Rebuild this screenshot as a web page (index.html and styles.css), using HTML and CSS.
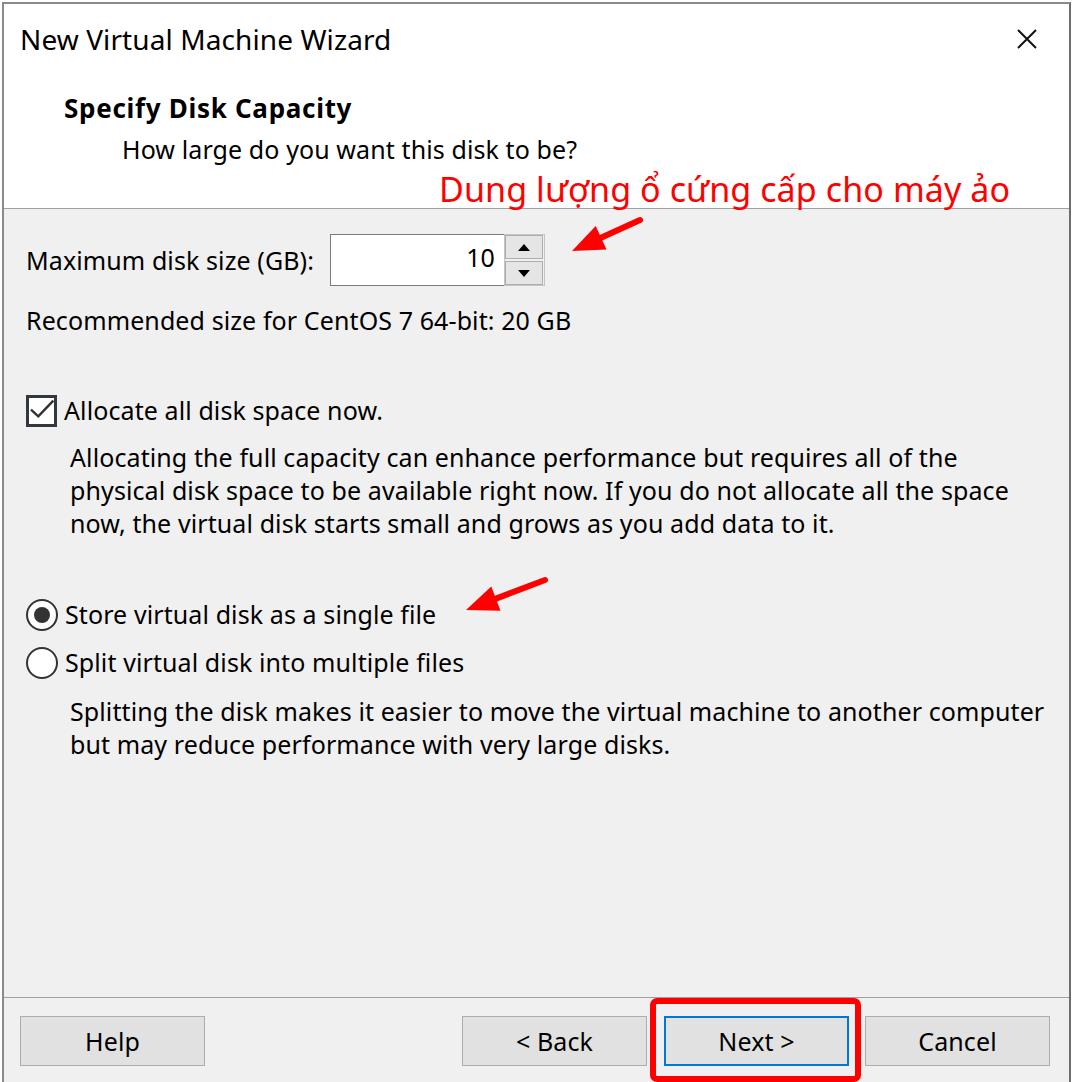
FILE: index.html
```html
<!DOCTYPE html>
<html lang="en">
<head>
<meta charset="utf-8">
<title>New Virtual Machine Wizard</title>
<link rel="stylesheet" href="styles.css">
</head>
<body>
<div class="window">
  <div class="header">
    <div class="titlebar">
      <span class="title">New Virtual Machine Wizard</span>
      <svg class="close" width="20" height="20" viewBox="0 0 20 20"><path d="M1 1 L19 19 M19 1 L1 19" stroke="#111" stroke-width="2" fill="none"/></svg>
    </div>
    <div class="heading">Specify Disk Capacity</div>
    <div class="subheading">How large do you want this disk to be?</div>
  </div>
  <div class="content">
    <div class="size-row">
      <span class="label">Maximum disk size (GB):</span>
      <div class="spinner">
        <div class="spin-input">10</div>
        <div class="spin-btns">
          <div class="spin-btn"><svg width="12" height="7" viewBox="0 0 12 7"><path d="M0 7 L6 0 L12 7 Z" fill="#000"/></svg></div>
          <div class="spin-btn"><svg width="12" height="7" viewBox="0 0 12 7"><path d="M0 0 L12 0 L6 7 Z" fill="#000"/></svg></div>
        </div>
      </div>
    </div>
    <div class="recommended">Recommended size for CentOS 7 64-bit: 20 GB</div>
    <div class="check-row">
      <span class="checkbox"><svg width="25" height="25" viewBox="0 0 25 25"><path d="M2 11.7 L9.3 18.3 L24.3 2.7" stroke="#333" stroke-width="2.4" fill="none"/></svg></span>
      <span class="opt-label">Allocate all disk space now.</span>
    </div>
    <p class="desc desc-alloc">Allocating the full capacity can enhance performance but requires all of the<br>physical disk space to be available right now. If you do not allocate all the space<br>now, the virtual disk starts small and grows as you add data to it.</p>
    <div class="radio-row radio-first">
      <span class="radio checked"></span>
      <span class="opt-label">Store virtual disk as a single file</span>
    </div>
    <div class="radio-row radio-second">
      <span class="radio"></span>
      <span class="opt-label">Split virtual disk into multiple files</span>
    </div>
    <p class="desc desc-split">Splitting the disk makes it easier to move the virtual machine to another computer<br>but may reduce performance with very large disks.</p>
  </div>
  <div class="footer">
    <button class="btn">Help</button>
    <span class="spacer"></span>
    <button class="btn btn-back">&lt; Back</button>
    <button class="btn btn-next">Next &gt;</button>
    <button class="btn btn-cancel">Cancel</button>
  </div>
</div>
<div class="annotation">Dung lượng ổ cứng cấp cho máy ảo</div>
<svg class="marks" width="1073" height="1082" viewBox="0 0 1073 1082">
  <line x1="640" y1="220" x2="601" y2="237.7" stroke="#ff0000" stroke-width="6" stroke-linecap="round"/>
  <polygon points="572,251 595.7,225.9 606.5,249.5" fill="#ff0000"/>
  <line x1="545" y1="580" x2="496" y2="598.6" stroke="#ff0000" stroke-width="6" stroke-linecap="round"/>
  <polygon points="466,610 491.3,586.4 500.5,610.8" fill="#ff0000"/>
  <rect x="653" y="1001" width="205" height="78" rx="4" ry="4" fill="none" stroke="#ff0000" stroke-width="6"/>
</svg>
</body>
</html>
```
FILE: styles.css
```css
html, body {
  margin: 0;
  padding: 0;
  background: #ffffff;
}

body {
  font-family: "Noto Sans", "Open Sans", sans-serif;
  color: #000;
  overflow: hidden;
}

.window {
  box-sizing: border-box;
  margin: 2px 0 0 2px;
  width: 1069px;
  height: 1080px;
  border: 2px solid #8a8a8a;
  border-right-color: #6d6d6d;
  border-bottom: none;
  background: #f0f0f0;
  display: flex;
  flex-direction: column;
}

.header {
  box-sizing: border-box;
  height: 205px;
  background: #ffffff;
  border-bottom: 1px solid #a0a0a0;
  padding-top: 17px;
}

.titlebar {
  display: flex;
  align-items: center;
  justify-content: space-between;
  padding-left: 16px;
  padding-right: 32px;
  height: 36px;
}

.title {
  font-size: 28px;
  letter-spacing: 0.1px;
  line-height: 36px;
}

.close {
  display: block;
  margin-top: 0;
}

.heading {
  font-size: 26px;
  font-weight: 700;
  letter-spacing: 0.7px;
  line-height: 33px;
  margin-top: 35px;
  padding-left: 60px;
}

.subheading {
  font-size: 25px;
  letter-spacing: 0.1px;
  line-height: 33px;
  margin-top: 8px;
  padding-left: 118px;
}

.content {
  box-sizing: border-box;
  height: 789px;
  border-bottom: 1px solid #a0a0a0;
  padding-left: 22px;
  font-size: 25px;
  letter-spacing: 0.1px;
  line-height: 33px;
}

.size-row {
  display: flex;
  align-items: center;
  height: 52px;
  margin-top: 25px;
}

.label {
  display: block;
}

.spinner {
  display: flex;
  margin-left: 16px;
}

.spin-input {
  box-sizing: border-box;
  width: 174px;
  height: 52px;
  background: #ffffff;
  border: 1px solid #7a7a7a;
  border-right: none;
  text-align: right;
  padding-right: 9px;
  line-height: 44px;
}

.spin-btns {
  box-sizing: border-box;
  width: 41px;
  height: 52px;
  border: 1px solid #c4c4c4;
  background: #f0f0f0;
  display: flex;
  flex-direction: column;
  justify-content: space-between;
  padding: 0 1px 0 0;
}

.spin-btn {
  box-sizing: border-box;
  height: 24px;
  background: #e5e5e5;
  border: 1px solid #adadad;
  display: flex;
  align-items: center;
  justify-content: center;
}

.recommended {
  margin-top: 18px;
}

.check-row,
.radio-row {
  display: flex;
  align-items: center;
  height: 33px;
}

.check-row {
  margin-top: 57px;
}

.checkbox {
  box-sizing: border-box;
  width: 31px;
  height: 32px;
  border: 3px solid #333840;
  background: #ffffff;
  display: flex;
  align-items: center;
  justify-content: center;
}

.checkbox svg {
  display: block;
}

.opt-label {
  margin-left: 7px;
}

.desc {
  margin: 0;
  padding-left: 44px;
}

.desc-alloc {
  margin-top: 14px;
}

.radio-first {
  margin-top: 58px;
}

.radio-second {
  margin-top: 15px;
}

.radio {
  box-sizing: border-box;
  width: 32px;
  height: 32px;
  border-radius: 50%;
  border: 2.5px solid #333333;
  background: #ffffff;
  display: flex;
  align-items: center;
  justify-content: center;
}

.radio.checked::after {
  content: "";
  width: 16px;
  height: 16px;
  border-radius: 50%;
  background: #333333;
}

.radio + .opt-label {
  margin-left: 7px;
}

.desc-split {
  margin-top: 16px;
}

.footer {
  display: flex;
  align-items: flex-start;
  padding: 18px 19px 0 16px;
}

.btn {
  box-sizing: border-box;
  width: 185px;
  height: 50px;
  background: #e1e1e1;
  border: 1px solid #adadad;
  font-family: "Noto Sans", "Open Sans", sans-serif;
  font-size: 25px;
  letter-spacing: 0.1px;
  color: #000;
  padding: 0;
  line-height: 46px;
}

.spacer {
  flex: 1;
}

.btn-next {
  margin-left: 17px;
  border: 2px solid #0078d7;
}

.btn-cancel {
  margin-left: 16px;
}

.annotation {
  position: absolute;
  left: 439px;
  top: 166px;
  font-size: 34px;
  letter-spacing: 0.1px;
  line-height: 46px;
  color: #ff0000;
  white-space: nowrap;
}

.marks {
  position: absolute;
  left: 0;
  top: 0;
  pointer-events: none;
}
```
